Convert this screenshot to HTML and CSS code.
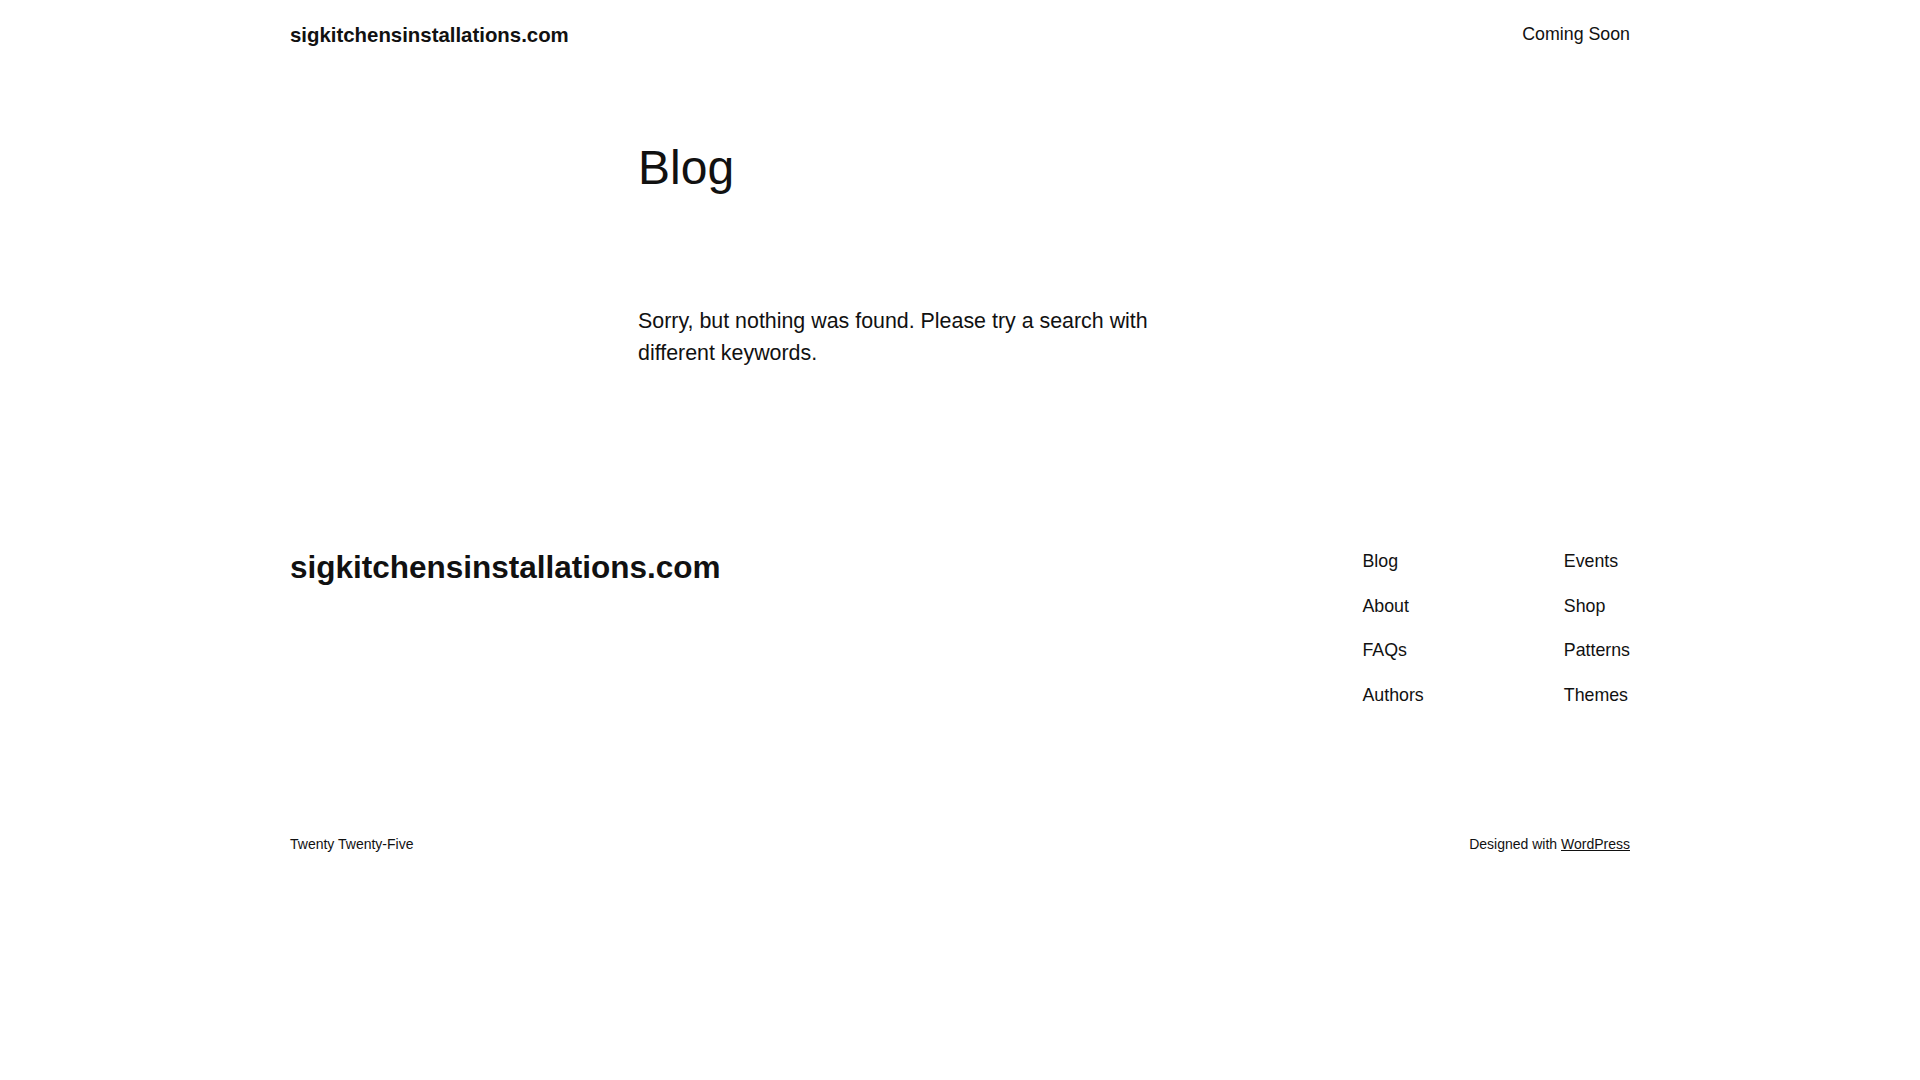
FILE: index.html
```html
<!DOCTYPE html>
<html lang="en">
<head>
<meta charset="utf-8">
<title>Blog – sigkitchensinstallations.com</title>
<link rel="stylesheet" href="styles.css">
</head>
<body>
<header class="site-header">
  <div class="wide">
    <a class="site-title" href="#">sigkitchensinstallations.com</a>
    <nav class="header-nav"><a href="#">Coming Soon</a></nav>
  </div>
</header>
<main class="site-main">
  <div class="content">
    <h1 class="page-title">Blog</h1>
    <p class="no-results">Sorry, but nothing was found. Please try a search with different keywords.</p>
  </div>
</main>
<footer class="site-footer">
  <div class="wide footer-top">
    <a class="footer-title" href="#">sigkitchensinstallations.com</a>
    <div class="footer-navs">
      <ul class="footer-col">
        <li><a href="#">Blog</a></li>
        <li><a href="#">About</a></li>
        <li><a href="#">FAQs</a></li>
        <li><a href="#">Authors</a></li>
      </ul>
      <ul class="footer-col">
        <li><a href="#">Events</a></li>
        <li><a href="#">Shop</a></li>
        <li><a href="#">Patterns</a></li>
        <li><a href="#">Themes</a></li>
      </ul>
    </div>
  </div>
  <div class="wide footer-bottom">
    <span>Twenty Twenty-Five</span>
    <span>Designed with <a class="wp-link" href="#">WordPress</a></span>
  </div>
</footer>
</body>
</html>
```
FILE: styles.css
```css
html, body {
  margin: 0;
  padding: 0;
  background: #ffffff;
}
body {
  font-family: "Liberation Sans", Arial, sans-serif;
  color: #111111;
}
a {
  color: #111111;
  text-decoration: none;
}
.wide {
  width: 1340px;
  margin: 0 auto;
  display: flex;
  justify-content: space-between;
}
.site-header .wide {
  height: 70px;
  align-items: center;
}
.site-title {
  font-size: 20.4px;
  font-weight: 700;
  line-height: 1.2;
}
.header-nav a {
  font-size: 17.8px;
  line-height: 1.2;
}
.content {
  width: 645px;
  margin: 0 auto;
  padding-left: 1px;
}
.page-title {
  margin: 69px 0 0;
  font-size: 48px;
  font-weight: 400;
  line-height: 1.2;
}
.no-results {
  margin: 108.5px 0 0;
  max-width: 540px;
  font-size: 21.4px;
  line-height: 32px;
}
.footer-top {
  margin-top: 179px;
  align-items: flex-start;
}
.footer-title {
  font-size: 31.5px;
  font-weight: 700;
  line-height: 38px;
}
.footer-navs {
  display: flex;
  gap: 140px;
}
.footer-col {
  list-style: none;
  margin: 0;
  padding: 0;
  display: flex;
  flex-direction: column;
  gap: 17.5px;
}
.footer-col a {
  font-size: 17.8px;
  line-height: 27px;
  display: block;
}
.footer-bottom {
  margin-top: 125px;
  font-size: 14px;
  line-height: 20px;
}
.wp-link {
  text-decoration: underline;
}
```
